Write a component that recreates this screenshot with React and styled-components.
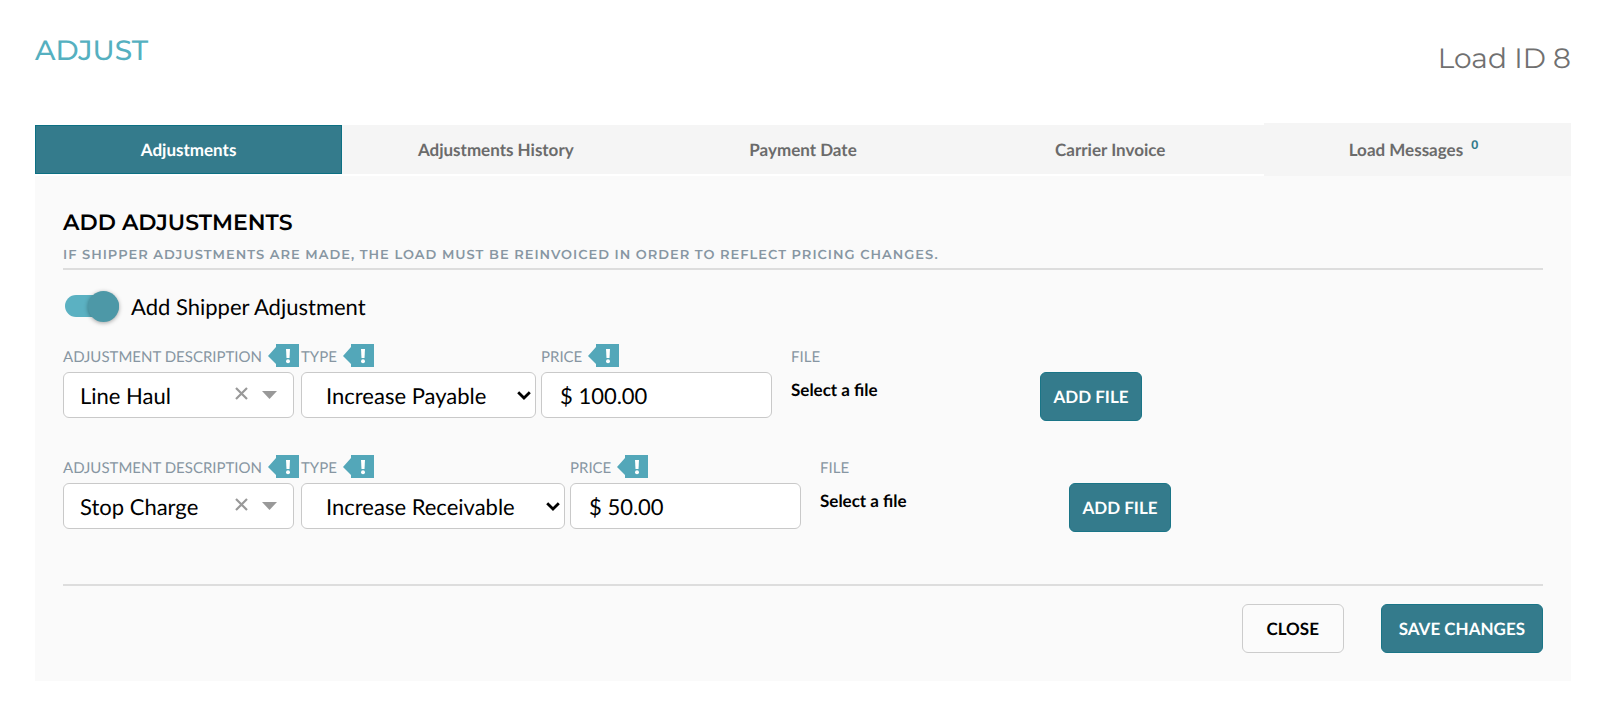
import React, { useState } from "react";
import styled, { createGlobalStyle } from "styled-components";

const GlobalStyle = createGlobalStyle`
  * {
    box-sizing: border-box;
  }
  body {
    margin: 0;
    background: #ffffff;
    color: #000000;
    font-family: Lato, "Open Sans", sans-serif;
    text-rendering: geometricPrecision;
  }
  button, input, select {
    font-family: inherit;
    color: inherit;
    text-rendering: inherit;
  }
`;

const headingFont = `Montserrat, Inter, sans-serif`;

const Page = styled.main`
  padding: 33px 29px 30px 35px;
`;

const Header = styled.header`
  display: flex;
  justify-content: space-between;
  align-items: flex-start;
  height: 90px;
`;

const Title = styled.h1`
  margin: 0;
  font: 500 28px/36px ${headingFont};
  color: #55b0c0;
`;

const LoadId = styled.p`
  margin: 0;
  padding-top: 8px;
  font: 400 28px/36px ${headingFont};
  color: #707070;
`;

const Tabs = styled.nav`
  display: flex;
  align-items: center;
`;

const Tab = styled.button`
  flex: 1 1 0;
  height: ${(props) => (props.$tall ? "53px" : "49px")};
  padding: 0;
  border: 1px solid ${(props) => (props.$active ? "#0c7083" : "#f5f5f5")};
  background: ${(props) => (props.$active ? "#347b8c" : "#f5f5f5")};
  color: ${(props) => (props.$active ? "#ffffff" : "#6b6b6b")};
  font-size: 17px;
  font-weight: 700;
  cursor: pointer;
`;

const Count = styled.sup`
  margin: 0 8px 0 8px;
  font-size: 12px;
  font-weight: 900;
  line-height: 0;
  color: #347b8c;
`;

const Panel = styled.section`
  padding: 35px 28px 28px;
  background: #fafafa;
`;

const PanelHead = styled.div`
  padding-bottom: 3px;
  border-bottom: 2px solid #dddddd;
`;

const SectionTitle = styled.h2`
  margin: 0;
  font: 600 22px/24px ${headingFont};
`;

const Note = styled.p`
  margin: 0;
  padding-top: 10px;
  font: 600 13px/20px ${headingFont};
  letter-spacing: 1px;
  color: #8796a2;
`;

const SwitchRow = styled.label`
  display: flex;
  align-items: center;
  gap: 12px;
  height: 32px;
  margin: 20px 0 22px;
  padding-left: 2px;
  font-size: 22px;
`;

const Switch = styled.input`
  display: flex;
  align-items: center;
  appearance: none;
  width: 54px;
  height: 22px;
  margin: 0;
  border-radius: 11px;
  background: ${(props) => (props.checked ? "#5bb1c2" : "#bbbbbb")};
  cursor: pointer;

  &::before {
    content: "";
    width: 31px;
    height: 31px;
    margin-left: ${(props) => (props.checked ? "23px" : "0")};
    border-radius: 50%;
    background: #4d98a7;
    box-shadow: 0 1px 4px rgba(0, 0, 0, 0.35);
  }
`;

const Row = styled.div`
  display: flex;
  align-items: flex-start;
  height: 111px;
`;

const Field = styled.div`
  width: ${(props) => props.$width}px;
  margin-right: ${(props) => props.$gap || 0}px;
`;

const LabelLine = styled.div`
  display: flex;
  align-items: center;
  gap: 6px;
  height: 23px;
  margin-bottom: 5px;
  white-space: nowrap;
`;

const Label = styled.label`
  padding-top: 2px;
  font-size: 15px;
  color: #8796a2;
`;

const HintButton = styled.button`
  display: flex;
  padding: 0;
  border: 0;
  background: none;
  cursor: pointer;
`;

const Box = styled.div`
  display: flex;
  align-items: center;
  height: 46px;
  padding: 0 ${(props) => props.$right || 0}px 0 ${(props) => props.$left}px;
  border: 1px solid #c9c9c9;
  border-radius: 6px;
  background: #ffffff;
`;

const Select = styled.select`
  appearance: none;
  flex: 1;
  min-width: 0;
  padding: 0;
  border: 0;
  background: none;
  font-size: 22px;
  outline: none;
`;

const Input = styled.input`
  flex: 1;
  min-width: 0;
  padding: 0;
  border: 0;
  background: none;
  font-size: 22px;
  outline: none;
`;

const ClearButton = styled.button`
  display: flex;
  margin-right: 14px;
  padding: 0 0 4px;
  border: 0;
  background: none;
  cursor: pointer;
`;

const FileName = styled.p`
  margin: 0;
  padding-top: 6px;
  font-size: 17px;
  font-weight: 700;
  line-height: 24px;
`;

const Button = styled.button`
  min-width: 102px;
  height: 49px;
  padding: 0 17px;
  border: 1px solid ${(props) => (props.$outline ? "#cccccc" : "#1a7587")};
  border-radius: 6px;
  background: ${(props) => (props.$outline ? "#fbfbfb" : "#347b8c")};
  color: ${(props) => (props.$outline ? "#000000" : "#ffffff")};
  font-size: 17px;
  font-weight: 700;
  white-space: nowrap;
  cursor: pointer;
`;

const FileButton = styled(Button)`
  margin-top: 28px;
  padding: 0;
`;

const Footer = styled.footer`
  display: flex;
  justify-content: flex-end;
  gap: 37px;
  margin-top: 18px;
  padding-top: 18px;
  border-top: 2px solid #dddddd;
`;

const Hint = ({ about }) => (
  <HintButton type="button" aria-label={`About ${about}`}>
    <svg width="31" height="23" viewBox="0 0 31 23">
      <path d="M8 0h23v23H8v-3L0 12 8 3z" fill="#53a7b9" />
      <path d="M18 5h4l-.5 9h-3z" fill="#fff" />
      <circle cx="20" cy="17.3" r="2" fill="#fff" />
    </svg>
  </HintButton>
);

const Caret = () => (
  <svg width="15" height="8" viewBox="0 0 15 8">
    <path d="M0 0h15L7.500 8z" fill="#999" />
  </svg>
);

const Chevron = () => (
  <svg width="14" height="9" viewBox="0 0 14 9">
    <path d="M1.200 1.200 7 7l5.800-5.800" fill="none" stroke="#000" strokeWidth="2.800" />
  </svg>
);

const Cross = () => (
  <svg width="13" height="13" viewBox="0 0 13 13">
    <path d="m1 1 11 11M12 1 1 12" stroke="#999" strokeWidth="2.200" />
  </svg>
);

const tabs = [
  "Adjustments",
  "Adjustments History",
  "Payment Date",
  "Carrier Invoice",
  "Load Messages",
];

const adjustments = [
  { id: 1, description: "Line Haul", type: "Increase Payable", price: "$ 100.00", typeWidth: 235 },
  { id: 2, description: "Stop Charge", type: "Increase Receivable", price: "$ 50.00", typeWidth: 264 },
];

const AdjustmentRow = ({ item }) => {
  const [description, setDescription] = useState(item.description);
  const [type, setType] = useState(item.type);
  const [price, setPrice] = useState(item.price);

  return (
    <Row>
      <Field $width={231} $gap={7}>
        <LabelLine>
          <Label htmlFor={`description-${item.id}`}>ADJUSTMENT DESCRIPTION</Label>
          <Hint about="adjustment description" />
        </LabelLine>
        <Box $left={16} $right={16}>
          <Select
            id={`description-${item.id}`}
            value={description}
            onChange={(event) => setDescription(event.target.value)}
          >
            <option value="" />
            <option>Line Haul</option>
            <option>Stop Charge</option>
          </Select>
          <ClearButton type="button" aria-label="Clear" onClick={() => setDescription("")}>
            <Cross />
          </ClearButton>
          <Caret />
        </Box>
      </Field>
      <Field $width={item.typeWidth} $gap={5}>
        <LabelLine>
          <Label htmlFor={`type-${item.id}`}>TYPE</Label>
          <Hint about="type" />
        </LabelLine>
        <Box $left={24} $right={4}>
          <Select
            id={`type-${item.id}`}
            value={type}
            onChange={(event) => setType(event.target.value)}
          >
            <option>Increase Payable</option>
            <option>Increase Receivable</option>
          </Select>
          <Chevron />
        </Box>
      </Field>
      <Field $width={231} $gap={19}>
        <LabelLine>
          <Label htmlFor={`price-${item.id}`}>PRICE</Label>
          <Hint about="price" />
        </LabelLine>
        <Box $left={18}>
          <Input
            id={`price-${item.id}`}
            type="text"
            value={price}
            onChange={(event) => setPrice(event.target.value)}
          />
        </Box>
      </Field>
      <Field $width={249}>
        <LabelLine>
          <Label htmlFor={`file-${item.id}`}>FILE</Label>
        </LabelLine>
        <FileName>Select a file</FileName>
      </Field>
      <FileButton type="button" id={`file-${item.id}`}>
        ADD FILE
      </FileButton>
    </Row>
  );
};

const App = () => {
  const [active, setActive] = useState("Adjustments");
  const [shipper, setShipper] = useState(true);

  return (
    <Page>
      <GlobalStyle />
      <Header>
        <Title>ADJUST</Title>
        <LoadId>Load ID 8</LoadId>
      </Header>
      <Tabs>
        {tabs.map((tab) => (
          <Tab
            key={tab}
            type="button"
            $active={tab === active}
            $tall={tab === "Load Messages"}
            onClick={() => setActive(tab)}
          >
            {tab}
            {tab === "Load Messages" && <Count>0</Count>}
          </Tab>
        ))}
      </Tabs>
      <Panel>
        <PanelHead>
          <SectionTitle>ADD ADJUSTMENTS</SectionTitle>
          <Note>
            IF SHIPPER ADJUSTMENTS ARE MADE, THE LOAD MUST BE REINVOICED IN ORDER TO REFLECT PRICING CHANGES.
          </Note>
        </PanelHead>
        <SwitchRow>
          <Switch
            type="checkbox"
            role="switch"
            checked={shipper}
            onChange={(event) => setShipper(event.target.checked)}
          />
          Add Shipper Adjustment
        </SwitchRow>
        {adjustments.map((item) => (
          <AdjustmentRow key={item.id} item={item} />
        ))}
        <Footer>
          <Button type="button" $outline>
            CLOSE
          </Button>
          <Button type="button">SAVE CHANGES</Button>
        </Footer>
      </Panel>
    </Page>
  );
};

export default App;
